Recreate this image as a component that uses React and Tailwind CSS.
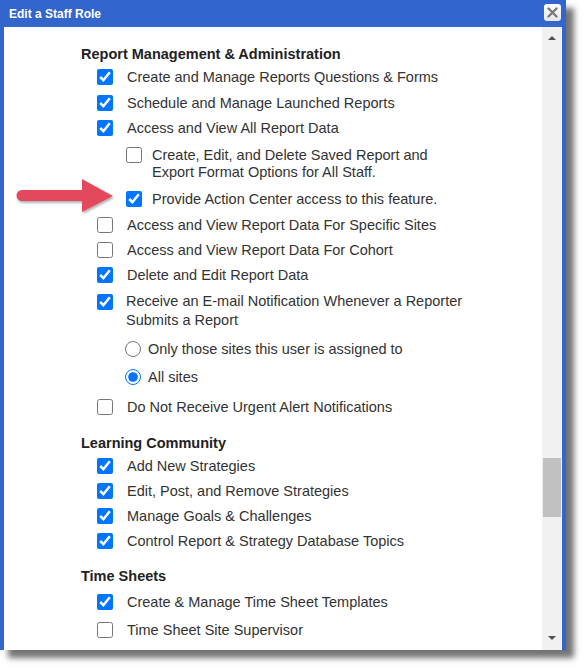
import React from "react";

const rows = [
  { kind: "heading", label: "Report Management & Administration", mt: "mt-[18px]" },
  { kind: "check", label: "Create and Manage Reports Questions & Forms", checked: true, mt: "mt-[5px]" },
  { kind: "check", label: "Schedule and Manage Launched Reports", checked: true, mt: "mt-[8px]" },
  { kind: "check", label: "Access and View All Report Data", checked: true, mt: "mt-[7px]" },
  {
    kind: "sub",
    label: ["Create, Edit, and Delete Saved Report and", "Export Format Options for All Staff."],
    checked: false,
    mt: "mt-[10px]",
  },
  { kind: "sub", label: ["Provide Action Center access to this feature."], checked: true, mt: "mt-[10px]" },
  { kind: "check", label: "Access and View Report Data For Specific Sites", checked: false, mt: "mt-[8px]" },
  { kind: "check", label: "Access and View Report Data For Cohort", checked: false, mt: "mt-[7px]" },
  { kind: "check", label: "Delete and Edit Report Data", checked: true, mt: "mt-[7px]" },
  {
    kind: "check2",
    label: ["Receive an E-mail Notification Whenever a Reporter", "Submits a Report"],
    checked: true,
    mt: "mt-[8px]",
  },
  { kind: "radio", label: "Only those sites this user is assigned to", checked: false, mt: "mt-[10px]" },
  { kind: "radio", label: "All sites", checked: true, mt: "mt-[10px]" },
  { kind: "check", label: "Do Not Receive Urgent Alert Notifications", checked: false, mt: "mt-[12px]" },
  { kind: "heading", label: "Learning Community", mt: "mt-[18px]" },
  { kind: "check", label: "Add New Strategies", checked: true, mt: "mt-[5px]" },
  { kind: "check", label: "Edit, Post, and Remove Strategies", checked: true, mt: "mt-[7px]" },
  { kind: "check", label: "Manage Goals & Challenges", checked: true, mt: "mt-[7px]" },
  { kind: "check", label: "Control Report & Strategy Database Topics", checked: true, mt: "mt-[7px]" },
  { kind: "heading", label: "Time Sheets", mt: "mt-[17px]" },
  { kind: "check", label: "Create & Manage Time Sheet Templates", checked: true, mt: "mt-[8px]" },
  { kind: "check", label: "Time Sheet Site Supervisor", checked: false, mt: "mt-[10px]" },
];

function Row({ row }) {
  if (row.kind === "heading") {
    return <div className={`${row.mt} pl-[77px] font-bold leading-[18px] text-[#222]`}>{row.label}</div>;
  }
  if (row.kind === "check") {
    return (
      <label className={`${row.mt} flex items-start pl-[93px] leading-[18px]`}>
        <input type="checkbox" defaultChecked={row.checked} className="m-0 mt-[1px] h-4 w-4 shrink-0" />
        <span className="ml-[14px]">{row.label}</span>
      </label>
    );
  }
  if (row.kind === "check2") {
    return (
      <label className={`${row.mt} flex items-start pl-[93px] leading-[19px]`}>
        <input type="checkbox" defaultChecked={row.checked} className="m-0 mt-[2px] h-4 w-4 shrink-0" />
        <span className="ml-[13px]">
          {row.label.map((l) => (
            <span key={l} className="block">
              {l}
            </span>
          ))}
        </span>
      </label>
    );
  }
  if (row.kind === "sub") {
    return (
      <label className={`${row.mt} flex items-start pl-[122px] leading-[17px]`}>
        <input type="checkbox" defaultChecked={row.checked} className="m-0 mt-[0px] h-4 w-4 shrink-0" />
        <span className="ml-[10px]">
          {row.label.map((l) => (
            <span key={l} className="block">
              {l}
            </span>
          ))}
        </span>
      </label>
    );
  }
  return (
    <label className={`${row.mt} flex items-start pl-[121px] leading-[18px]`}>
      <input type="radio" name="sites" defaultChecked={row.checked} className="m-0 mt-[1px] h-4 w-4 shrink-0" />
      <span className="ml-[7px]">{row.label}</span>
    </label>
  );
}

export default function App() {
  return (
    <div className="relative h-[670px] w-[584px] overflow-hidden bg-white">
      <div className="flex h-[650px] w-[566px] flex-col bg-[#3366cc] shadow-[8px_8px_6px_rgba(0,0,0,0.55)]">
        {/* title bar */}
        <div className="flex h-[27px] shrink-0 items-center justify-between pl-[9px] pr-[5px]">
          <span className="text-[12px] font-bold text-white" style={{ fontFamily: '"Liberation Sans", Arial, sans-serif' }}>
            Edit a Staff Role
          </span>
          <button className="mb-[2px] flex h-[17px] w-[17px] items-center justify-center rounded-[3px] bg-gradient-to-b from-white to-[#e6e6e6]">
            <svg width="11" height="11" viewBox="0 0 11 11">
              <path d="M1.5 1.5 L9.5 9.5 M9.5 1.5 L1.5 9.5" stroke="#7a7a7a" strokeWidth="2.4" strokeLinecap="round" />
            </svg>
          </button>
        </div>

        {/* body */}
        <div className="flex min-h-0 flex-1 pl-[4px] pr-[4px]">
          <div
            className="flex-1 overflow-hidden bg-white text-[14.5px] text-[#333]"
            style={{ fontFamily: '"Liberation Sans", Arial, sans-serif' }}
          >
            {rows.map((r, i) => (
              <Row key={i} row={r} />
            ))}
          </div>

          {/* scrollbar */}
          <div className="flex w-[20px] flex-col items-center bg-[#f1f1f1]">
            <svg width="20" height="20" viewBox="0 0 20 20" className="mt-[1px]">
              <path d="M6 12 L10 8 L14 12 Z" fill="#505050" />
            </svg>
            <div className="mt-[410px] h-[59px] w-[18px] bg-[#c1c1c1]" />
            <div className="flex-1" />
            <svg width="20" height="20" viewBox="0 0 20 20" className="mb-[2px]">
              <path d="M6 8 L14 8 L10 12 Z" fill="#505050" />
            </svg>
          </div>
        </div>
      </div>

      {/* red callout arrow */}
      <svg className="absolute left-[12px] top-[174px]" width="110" height="44" viewBox="0 0 110 44">
        <defs>
          <filter id="sh" x="-10%" y="-20%" width="130%" height="150%">
            <feDropShadow dx="1" dy="2" stdDeviation="1.2" floodColor="#000" floodOpacity="0.3" />
          </filter>
        </defs>
        <g filter="url(#sh)">
          <path d="M10 16 L70 16 L70 5 L101 22 L70 38 L70 27 L10 27 A5.5 5.5 0 0 1 10 16 Z" fill="#e2495d" />
        </g>
      </svg>
    </div>
  );
}
